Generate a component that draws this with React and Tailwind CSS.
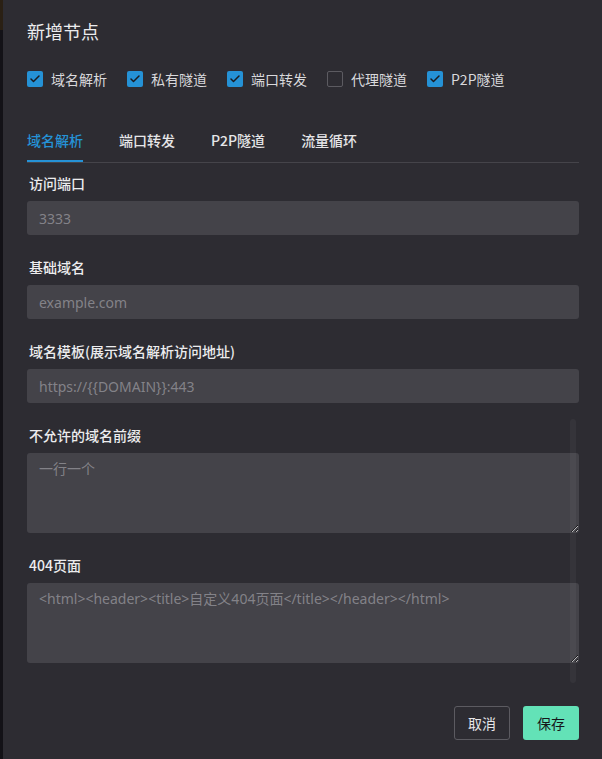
import { Check } from 'lucide-react';

const font = { fontFamily: '"Noto Sans CJK SC", "Noto Sans", sans-serif' };
const latin = { fontFamily: '"Noto Sans", "Noto Sans CJK SC", sans-serif' };

const options = [
  { label: '域名解析', checked: true },
  { label: '私有隧道', checked: true },
  { label: '端口转发', checked: true },
  { label: '代理隧道', checked: false },
  { label: 'P2P隧道', checked: true },
];

const tabs = ['域名解析', '端口转发', 'P2P隧道', '流量循环'];

function CheckItem({ label, checked }) {
  return (
    <label className="flex items-center gap-2 text-[14px] leading-[22px] text-[#d9d9dc]">
      {checked ? (
        <span className="flex h-4 w-4 items-center justify-center rounded-[2px] bg-[#2592d6]">
          <Check className="h-3 w-3 text-[#1b1b1f]" strokeWidth={3} />
        </span>
      ) : (
        <span className="h-4 w-4 rounded-[2px] border border-[#5c5b61]" />
      )}
      {label}
    </label>
  );
}

function Field({ label, children }) {
  return (
    <div className="flex flex-col gap-[7px]">
      <div className="px-[2px] text-[14px] leading-[22px] font-medium text-[#ececee]">{label}</div>
      {children}
    </div>
  );
}

const inputCls =
  'h-[34px] w-full rounded-[3px] bg-[#444349] px-3 text-[14px] text-[#d0d0d3] placeholder:text-[#838288] outline-none';
const areaCls =
  'h-[80px] w-full resize-y rounded-[3px] bg-[#444349] px-3 pt-[5px] text-[14px] leading-[22px] text-[#d0d0d3] placeholder:text-[#838288] outline-none';

export default function App() {
  return (
    <div className="flex h-[759px] w-[602px] overflow-hidden bg-[#2d2c32]" style={font}>
      <div className="flex w-[3px] flex-col">
        <div className="h-[30px] bg-[#2a2014]" />
        <div className="flex-1 bg-[#131217]" />
      </div>
      <div className="relative flex flex-1 flex-col pl-6 pr-[23px]">
        <h2 className="pt-[19px] text-[18px] leading-[24px] text-[#ececee]">新增节点</h2>

        <div className="mt-[25px] flex items-center gap-5">
          {options.map((o) => (
            <CheckItem key={o.label} {...o} />
          ))}
        </div>

        <div className="mt-[39px] flex gap-9 border-b border-[#45444a]">
          {tabs.map((t, i) => (
            <div
              key={t}
              className={`pb-[9px] text-[14px] leading-[22px] font-medium ${
                i === 0 ? 'border-b-2 border-[#2592d6] text-[#2592d6]' : 'border-b-2 border-transparent text-[#e6e6e8]'
              }`}
            >
              {t}
            </div>
          ))}
        </div>

        <div className="mt-[9px] flex flex-col gap-[21px]">
          <Field label="访问端口">
            <input className={inputCls} style={latin} placeholder="3333" />
          </Field>
          <Field label="基础域名">
            <input className={inputCls} style={latin} placeholder="example.com" />
          </Field>
          <Field label="域名模板(展示域名解析访问地址)">
            <input className={inputCls} style={latin} placeholder="https://{{DOMAIN}}:443" />
          </Field>
          <Field label="不允许的域名前缀">
            <textarea className={areaCls} style={latin} placeholder="一行一个" />
          </Field>
          <Field label="404页面">
            <textarea
              className={areaCls}
              style={latin}
              placeholder="<html><header><title>自定义404页面</title></header></html>"
            />
          </Field>
        </div>

        <div className="pointer-events-none absolute left-[567px] top-[419px] h-[264px] w-[6px] rounded-full bg-white/[0.04]" />

        <div className="mt-[43px] flex justify-end gap-[13px]">
          <button className="h-[34px] w-[56px] rounded-[3px] border border-[#5c5b61] text-[14px] text-[#e6e6e8]">
            取消
          </button>
          <button className="h-[34px] w-[56px] rounded-[3px] bg-[#63e2b7] text-[14px] text-[#16161a]">
            保存
          </button>
        </div>
      </div>
    </div>
  );
}
